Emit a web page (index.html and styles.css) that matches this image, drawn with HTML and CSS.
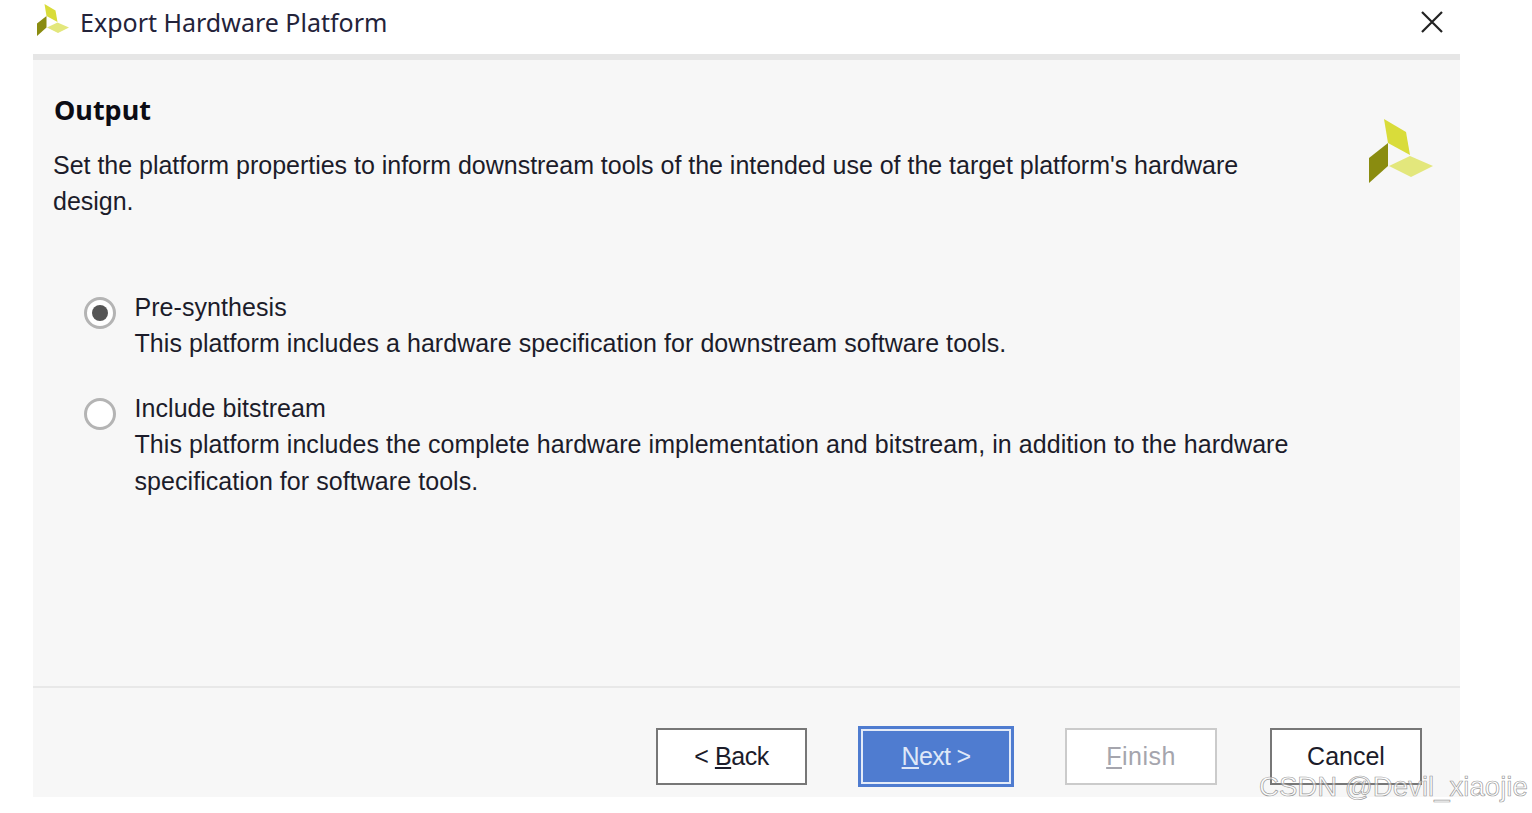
FILE: index.html
```html
<!DOCTYPE html>
<html lang="en">
<head>
  <meta charset="UTF-8">
  <title>Export Hardware Platform</title>
  <link rel="stylesheet" href="styles.css">
</head>
<body>
  <div class="dialog">
    <div class="titlebar">
      <svg class="logo-small" viewBox="0 0 64 64">
        <polygon points="15,0 37,13 41,36 19,24" fill="#d9dc3a"/>
        <polygon points="19,24 19,47 0,64 0,39" fill="#8a8c10"/>
        <polygon points="20,47 41,37 64,47 42,58" fill="#e3e77c"/>
      </svg>
      <span class="titlebar-text">Export Hardware Platform</span>
      <svg class="close" viewBox="0 0 22 22">
        <path d="M1 1 L21 21 M21 1 L1 21" stroke="#222" stroke-width="2.2" fill="none"/>
      </svg>
    </div>

    <div class="content">
      <div class="head">
        <div class="head-text">
          <h1>Output</h1>
          <p>Set the platform properties to inform downstream tools of the intended use of the target platform's hardware design.</p>
        </div>
        <svg class="logo-big" viewBox="0 0 64 64">
          <polygon points="15,0 37,13 41,36 19,24" fill="#d9dc3a"/>
          <polygon points="19,24 19,47 0,64 0,39" fill="#8a8c10"/>
          <polygon points="20,47 41,37 64,47 42,58" fill="#e3e77c"/>
        </svg>
      </div>

      <div class="options">
        <div class="option">
          <span class="radio checked"></span>
          <div class="option-text">
            <div>Pre-synthesis</div>
            <div>This platform includes a hardware specification for downstream software tools.</div>
          </div>
        </div>
        <div class="option">
          <span class="radio"></span>
          <div class="option-text">
            <div>Include bitstream</div>
            <div>This platform includes the complete hardware implementation and bitstream, in addition to the hardware specification for software tools.</div>
          </div>
        </div>
      </div>
    </div>

    <div class="footer">
      <button class="btn back">&lt; <u>B</u>ack</button>
      <button class="btn primary"><u>N</u>ext &gt;</button>
      <button class="btn disabled"><u>F</u>inish</button>
      <button class="btn">Cancel</button>
    </div>
  </div>
  <div class="watermark">CSDN @Devil_xiaojie</div>
</body>
</html>
```

FILE: styles.css
```css
html, body {
  margin: 0;
  padding: 0;
  background: #fff;
}

body {
  position: relative;
  height: 813px;
  overflow: hidden;
  font-family: "Liberation Sans", Arial, sans-serif;
  font-size: 25px;
  color: #1c1c2a;
}

.dialog {
  width: 1427px;
  height: 797px;
  margin-left: 33px;
  display: flex;
  flex-direction: column;
  background: #f7f7f7;
}

.titlebar {
  height: 54px;
  display: flex;
  align-items: center;
  background: #fff;
  border-bottom: 6px solid #e6e6e6;
  padding-left: 4px;
}

.logo-small {
  width: 32px;
  height: 32px;
  margin-right: 11px;
  margin-top: -15px;
}

.titlebar-text {
  font-family: "Noto Sans", sans-serif;
  font-size: 25px;
  color: #23233a;
  margin-top: -11px;
}

.close {
  width: 22px;
  height: 22px;
  margin-left: auto;
  margin-right: 17px;
  margin-top: -11px;
}

.content {
  flex: 1;
  padding: 0 21px 0 20px;
}

.head {
  display: flex;
  justify-content: space-between;
}

.head-text {
  width: 1200px;
}

h1 {
  font-family: "Noto Sans", sans-serif;
  font-size: 27px;
  font-weight: 700;
  line-height: 36px;
  color: #0c0c14;
  margin: 32px 0 19px 1px;
}

p {
  margin: 0;
  line-height: 36px;
  letter-spacing: -0.02px;
}

.logo-big {
  width: 64px;
  height: 64px;
  margin-top: 59px;
  margin-right: 6px;
}

.options {
  margin-top: 69.6px;
  padding-left: 31px;
  display: flex;
  flex-direction: column;
  gap: 28px;
}

.option {
  display: flex;
  gap: 18.5px;
}

.option-text {
  width: 1180px;
  line-height: 36.5px;
  letter-spacing: 0.06px;
}

.radio {
  flex: none;
  box-sizing: border-box;
  width: 32px;
  height: 32px;
  margin-top: 8px;
  border: 3px solid #b4b4b4;
  border-radius: 50%;
  background: #fff;
  display: flex;
  align-items: center;
  justify-content: center;
}

.radio.checked::after {
  content: "";
  width: 16px;
  height: 16px;
  border-radius: 50%;
  background: #555;
}

.footer {
  height: 111px;
  border-top: 2px solid #e8e8e8;
  display: flex;
  align-items: flex-start;
  justify-content: flex-end;
  gap: 50px;
  padding: 40px 38px 0 0;
  box-sizing: border-box;
}

.btn {
  box-sizing: border-box;
  width: 152px;
  height: 57px;
  background: #fff;
  border: 2px solid #777;
  font-family: "Liberation Sans", Arial, sans-serif;
  font-size: 25px;
  color: #1c1c2a;
  padding: 0;
}

.btn.back {
  width: 151px;
  letter-spacing: -0.4px;
}

.btn.primary {
  width: 156px;
  height: 61px;
  margin-top: -2px;
  margin-left: 1px;
  margin-right: 1px;
  background: #4f7cd0;
  color: #dfe8f8;
  border: 3px solid #4f7cd0;
  outline: 2px solid #e4ebf8;
  outline-offset: -5px;
  letter-spacing: -0.7px;
}

.btn.disabled {
  margin-right: 3px;
  border-color: #cbcbcb;
  color: #a5a5ad;
  letter-spacing: 0.5px;
}

.watermark {
  position: absolute;
  left: 1259px;
  top: 770px;
  font-size: 27.6px;
  line-height: 34px;
  white-space: nowrap;
  color: rgba(255, 255, 255, 0.55);
  -webkit-text-stroke: 0.7px rgba(130, 130, 130, 0.8);
}
```
